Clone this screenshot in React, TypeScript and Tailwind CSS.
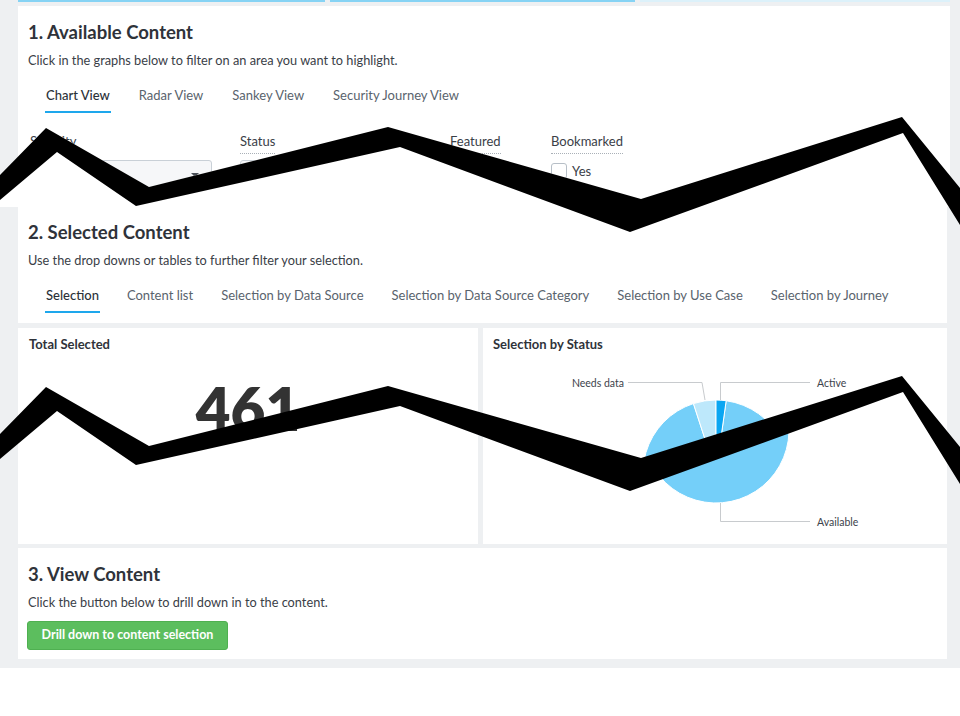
import React from 'react';

// Torn-screenshot dashboard: three stacked panels, a "Selected" pair of cards,
// and two black zigzag tears drawn over the page.

const BAND_TOP = [
  [0, 175], [46, 128], [149, 187], [388, 127], [641, 199], [902, 117], [960, 188],
];
const BAND_BOTTOM = [
  [0, 200], [57, 152], [136, 206], [400, 147], [630, 232], [903, 133], [960, 225],
];

const shift = (pts: number[][], dy: number) => pts.map(([x, y]) => [x, y + dy]);
const toPoints = (pts: number[][]) => pts.map(([x, y]) => `${x},${y}`).join(' ');
const band = (dy: number) =>
  toPoints([...shift(BAND_TOP, dy), ...shift(BAND_BOTTOM, dy).reverse()]);

const Tabs: React.FC<{ items: string[]; active: number; wide?: boolean }> = ({ items, active, wide }) => (
  <div className={wide ? 'ml-[17px] mt-[17px] flex gap-[27px]' : 'ml-[17px] mt-[17px] flex gap-[26px]'}>
    {items.map((t, i) => (
      <div
        key={t}
        className={
          i === active
            ? 'px-[1px] pb-[7px] border-b-[2px] border-[#1ea7ec] text-[13px] leading-[18px] font-medium text-[#2b3139]'
            : 'px-[1px] pb-[7px] border-b-[2px] border-transparent text-[13px] leading-[18px] text-[#59636d]'
        }
      >
        {t}
      </div>
    ))}
  </div>
);

const PanelHead: React.FC<{ title: string; text: string }> = ({ title, text }) => (
  <>
    <h2 className="text-[18.5px] leading-[20px] font-bold text-[#2f333a]">{title}</h2>
    <p className="mt-[9px] text-[12.75px] leading-[18px] text-[#3a4047]">{text}</p>
  </>
);

const FilterLabel: React.FC<{ children: React.ReactNode }> = ({ children }) => (
  <span className="inline-block pb-[3px] border-b border-dotted border-[#a9b0b7] text-[13px] leading-[18px] text-[#3a4047]">
    {children}
  </span>
);

const Select: React.FC = () => (
  <div className="mt-[6px] flex h-[30px] w-[182px] items-center justify-end rounded-[3px] border border-[#c9d0d7] bg-[#f6f7f9] pr-[12px]">
    <span className="h-0 w-0 border-x-[4px] border-t-[4px] border-x-transparent border-t-[#4a5058]" />
  </div>
);

const Check: React.FC = () => (
  <div className="mt-[8px] flex items-center gap-[5px]">
    <span className="h-[16px] w-[16px] rounded-[3px] border border-[#b7bfc7] bg-white" />
    <span className="text-[13px] leading-[18px] text-[#3a4047]">Yes</span>
  </div>
);

const rad = (d: number) => (d * Math.PI) / 180;
const slice = (cx: number, cy: number, r: number, a0: number, a1: number) => {
  const x0 = cx + r * Math.sin(rad(a0));
  const y0 = cy - r * Math.cos(rad(a0));
  const x1 = cx + r * Math.sin(rad(a1));
  const y1 = cy - r * Math.cos(rad(a1));
  const large = a1 - a0 > 180 ? 1 : 0;
  return `M${cx} ${cy} L${x0} ${y0} A${r} ${r} 0 ${large} 1 ${x1} ${y1} Z`;
};

const Pie: React.FC<{ cy: number }> = ({ cy }) => (
  <g stroke="#ffffff" strokeWidth="1">
    <path d={slice(716, cy, 73, 8, 342)} fill="#74cff9" />
    <path d={slice(716, cy, 73, 342, 360)} fill="#bde8fb" />
    <path d={slice(716, cy, 73, 0, 8)} fill="#0aa6f2" />
  </g>
);

const StatusChart: React.FC = () => (
  <svg width={464} height={184} viewBox="483 360 464 184" className="mt-[8px] block">
    <defs>
      <clipPath id="pie-top">
        <polygon points="483,360 947,360 947,447 902,384 636,475 483,425" />
      </clipPath>
      <clipPath id="pie-bottom">
        <polygon points="483,425 636,475 902,384 947,447 947,544 483,544" />
      </clipPath>
    </defs>
    <g clipPath="url(#pie-top)">
      <Pie cy={473} />
    </g>
    <g clipPath="url(#pie-bottom)">
      <Pie cy={430} />
    </g>
    <g fill="none" stroke="#c8cbce" strokeWidth="1">
      <polyline points="628,382.5 702,382.5 705,400" />
      <polyline points="720.5,400 720.5,382.5 810,382.5" />
      <polyline points="720.5,503 720.5,521.5 810,521.5" />
    </g>
    <g fill="#3d434b" fontSize="10.5" fontFamily="Lato, sans-serif">
      <text x="624" y="387" textAnchor="end">Needs data</text>
      <text x="817" y="387">Active</text>
      <text x="817" y="526">Available</text>
    </g>
  </svg>
);

const App: React.FC = () => {
  return (
    <div className="relative h-[716px] w-[960px] overflow-hidden bg-white font-[Lato,'Noto_Sans',sans-serif]">
      <div className="bg-[#eef0f2] pb-[9px] pl-[18px] pr-[13px]">
        {/* bottom edge of the tiles above */}
        <div className="flex h-[2px] gap-[5px]">
          <div className="w-[307px] shrink-0 bg-[#86d3f4]" />
          <div className="w-[305px] shrink-0 bg-[#86d3f4]" />
          <div className="w-[310px] shrink-0 bg-[#dcf1fa]" />
        </div>

        {/* 1. Available Content */}
        <section className="mr-[-3px] mt-[4px] h-[201px] overflow-hidden bg-white px-[10px] pt-[16px]">
          <PanelHead
            title="1. Available Content"
            text="Click in the graphs below to filter on an area you want to highlight."
          />
          <Tabs items={['Chart View', 'Radar View', 'Sankey View', 'Security Journey View']} active={0} wide />
          <div className="ml-[2px] mt-[15px] flex">
            <div className="w-[210px]">
              <FilterLabel>Severity</FilterLabel>
              <Select />
            </div>
            <div className="w-[210px]">
              <FilterLabel>Status</FilterLabel>
              <Select />
            </div>
            <div className="w-[101px]">
              <FilterLabel>Featured</FilterLabel>
              <Check />
            </div>
            <div>
              <FilterLabel>Bookmarked</FilterLabel>
              <Check />
            </div>
          </div>
        </section>

        {/* 2. Selected Content */}
        <section className="h-[116px] bg-white px-[10px] pt-[15px]">
          <PanelHead
            title="2. Selected Content"
            text="Use the drop downs or tables to further filter your selection."
          />
          <Tabs
            items={[
              'Selection',
              'Content list',
              'Selection by Data Source',
              'Selection by Data Source Category',
              'Selection by Use Case',
              'Selection by Journey',
            ]}
            active={0}
          />
        </section>

        <div className="mt-[5px] flex h-[216px] gap-[5px]">
          <div className="w-[460px] bg-white px-[11px] pt-[8px]">
            <h3 className="text-[13px] leading-[16px] font-bold text-[#2f333a]">Total Selected</h3>
            <div className="mt-[26px] text-center text-[60px] leading-none font-extrabold text-[#333333]">461</div>
          </div>
          <div className="flex-1 bg-white pt-[8px]">
            <h3 className="px-[10px] text-[13px] leading-[16px] font-bold text-[#2f333a]">Selection by Status</h3>
            <StatusChart />
          </div>
        </div>

        {/* 3. View Content */}
        <section className="mt-[4px] h-[111px] bg-white px-[10px] pt-[16px]">
          <PanelHead title="3. View Content" text="Click the button below to drill down in to the content." />
          <button className="ml-[-1px] mt-[10px] h-[29px] w-[201px] rounded-[3px] border border-[#4fb051] bg-[#5cbe5e] text-[12.5px] font-bold text-white">
            Drill down to content selection
          </button>
        </section>
      </div>

      {/* torn edges */}
      <svg
        className="pointer-events-none absolute left-0 top-0"
        width={960}
        height={716}
        viewBox="0 0 960 716"
      >
        <polygon points={toPoints([...BAND_TOP, [960, 207], [0, 207]])} fill="#ffffff" />
        <polygon points={band(0)} fill="#000000" />
        <polygon points={band(259)} fill="#000000" />
      </svg>
    </div>
  );
};

export default App;
